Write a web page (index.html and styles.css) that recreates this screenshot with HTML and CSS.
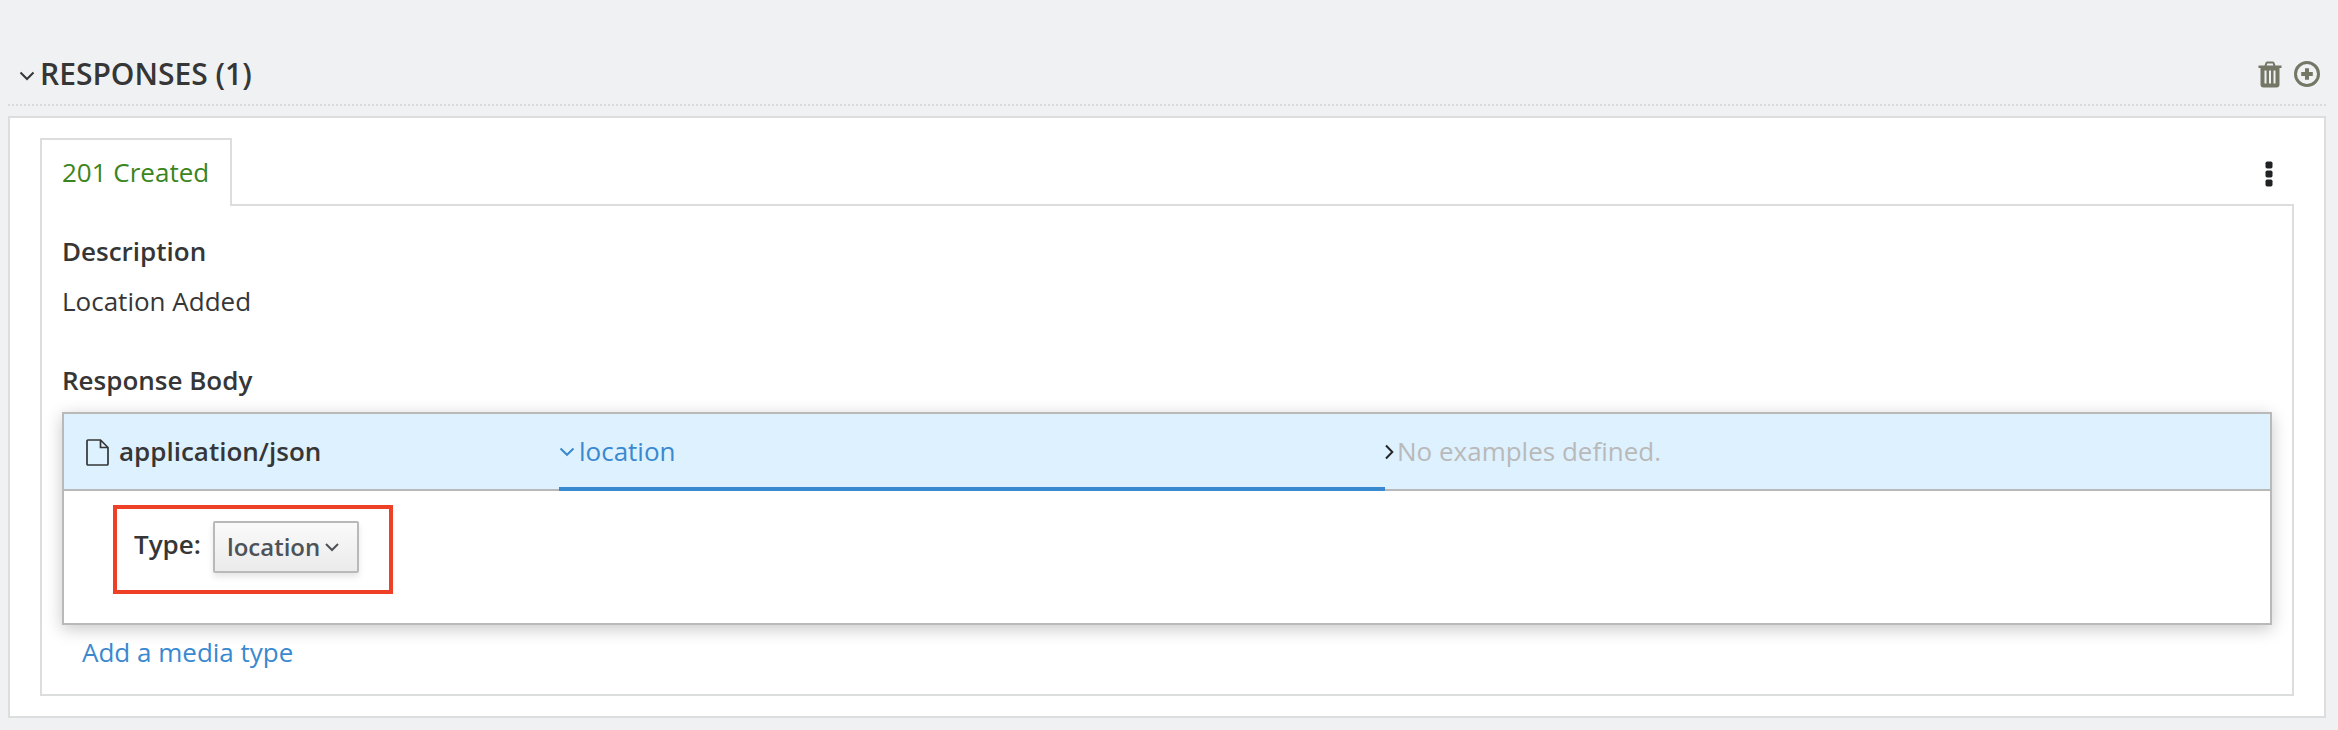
FILE: index.html
```html
<!DOCTYPE html>
<html lang="en">
<head>
<meta charset="utf-8">
<title>Responses</title>
<link rel="stylesheet" href="styles.css">
</head>
<body>
<section class="responses">
  <header class="section-head">
    <svg class="section-caret" width="16" height="10" viewBox="0 0 16 10"><path d="M1.5 1.5 8 8 14.5 1.5"/></svg>
    <h2 class="section-title">RESPONSES (1)</h2>
    <div class="actions">
      <svg class="trash" width="24" height="27" viewBox="0 0 24 27"><path fill-rule="evenodd" d="M.5 4.500H6.500L7.500 1.800Q8 .500 9.500.500H14.500Q16 .500 16.500 1.800L17.500 4.500H23.500V7H21.500V23.500Q21.500 26.500 18.500 26.500H5.500Q2.500 26.500 2.500 23.500V7H.500ZM8.700 4.500H15.300L14.700 2.500H9.300ZM6.500 9.500V22.500H8.500V9.500ZM11 9.500V22.500H13V9.500ZM15.500 9.500V22.500H17.500V9.500Z"/></svg>
      <svg class="add" width="26" height="26" viewBox="0 0 26 26"><circle cx="13" cy="13" r="11.500"/><path class="plus" d="M13 7.200V18.800M7.200 13H18.800"/></svg>
    </div>
  </header>
  <div class="card">
    <div class="tabs">
      <div class="tab">201 Created</div>
      <svg class="kebab" width="8" height="26" viewBox="0 0 8 26"><rect x=".5" y=".5" width="7" height="7" rx="1.700"/><rect x=".5" y="9.500" width="7" height="7" rx="1.700"/><rect x=".5" y="18.500" width="7" height="7" rx="1.700"/></svg>
    </div>
    <div class="panel">
      <h3 class="label label-description">Description</h3>
      <p class="description">Location Added</p>
      <h3 class="label label-body">Response Body</h3>
      <div class="media">
        <div class="media-head">
          <div class="media-name">
            <svg class="file" width="23" height="27" viewBox="0 0 23 27"><path d="M2 1H14.500L22 8.500V25Q22 26 21 26H2Q1 26 1 25V2Q1 1 2 1ZM14.500 1V8.500H22"/></svg>
            <span class="media-type">application/json</span>
          </div>
          <div class="media-schema">
            <svg class="caret" width="16" height="10" viewBox="0 0 16 10"><path d="M1.500 1.500 8 7.800 14.500 1.500"/></svg>
            <span class="schema-name">location</span>
          </div>
          <div class="media-examples">
            <svg class="chevron" width="9" height="16" viewBox="0 0 9 16"><path d="M1 1.500 7.300 8 1 14.500"/></svg>
            <span class="examples-text">No examples defined.</span>
          </div>
        </div>
        <div class="media-body">
          <div class="type-row">
            <span class="type-label">Type:</span>
            <button class="select" type="button"><span class="select-text">location</span><svg class="select-caret" width="14" height="10" viewBox="0 0 14 10"><path d="M1 2 7 8 13 2"/></svg></button>
          </div>
        </div>
      </div>
      <a class="add-media">Add a media type</a>
    </div>
  </div>
</section>
</body>
</html>
```
FILE: styles.css
```css
* { box-sizing: border-box; }
body {
  margin: 0;
  min-height: 730px;
  background: #f0f1f3;
  color: #363636;
  font: 26px/36px "Open Sans", "Noto Sans", sans-serif;
}
h2, h3, p { margin: 0; }
svg { display: block; flex: none; fill: none; overflow: visible; }
.responses { padding: 42px 12px 12px 8px; }
.section-head {
  display: flex;
  align-items: center;
  height: 64px;
  padding: 0 6px 0 11px;
  background: repeating-linear-gradient(90deg, #d9dadc 0 2px, transparent 2px 4px) bottom / 100% 2px no-repeat;
}
.section-caret { margin: 4px 5px 0 0; stroke: #363636; stroke-width: 2; }
.section-title { font-size: 30px; line-height: 40px; font-weight: 600; white-space: nowrap; }
.actions { display: flex; align-items: center; gap: 12px; margin-left: auto; }
.trash { fill: #757766; }
.add { stroke: #757766; stroke-width: 3; }
.plus { stroke-width: 4; }
.card {
  height: 602px;
  margin-top: 10px;
  padding: 20px 30px;
  border: 2px solid #dcdddd;
  background: #fff;
}
.tabs { display: flex; justify-content: space-between; height: 68px; padding-right: 21px; }
.tab {
  position: relative;
  width: 192px;
  padding: 14px 0 0 20px;
  border: 2px solid #dcdddd;
  border-bottom: 0;
  background: #fff;
  color: #3b8520;
  white-space: nowrap;
}
.kebab { margin-top: 23px; fill: #202224; }
.panel {
  height: 492px;
  margin-top: -2px;
  padding: 27px 20px 0;
  border: 2px solid #dcdddd;
}
.label { font-size: 26px; font-weight: 600; }
.description { margin-top: 14px; }
.label-body { margin-top: 43px; }
.media {
  height: 213px;
  margin-top: 14px;
  border: 2px solid #b9b9b9;
  box-shadow: 0 4px 16px rgba(0, 0, 0, .22);
}
.media-head {
  display: grid;
  grid-template-columns: 495px 826px 1fr;
  height: 77px;
  border-bottom: 2px solid #b9b9b9;
  background: #def1ff;
}
.media-name, .media-schema, .media-examples { display: flex; align-items: center; }
.media-name { gap: 10px; padding-left: 22px; font-weight: 600; }
.media-name, .media-examples { padding-bottom: 1px; }
.media-type, .schema-name, .examples-text { margin-top: -2px; }
.media-schema {
  gap: 4px;
  height: 77px;
  padding-top: 3px;
  border-bottom: 4px solid #3989d0;
  color: #3989d0;
}
.media-examples { gap: 3px; color: #b9b9b9; }
.file { stroke: #363636; stroke-width: 1.7; }
.caret { stroke: #3989d0; stroke-width: 2; }
.chevron { stroke: #242628; stroke-width: 2; }
.media-body { padding: 14px 0 0 49px; }
.type-row {
  display: flex;
  gap: 12px;
  width: 280px;
  height: 89px;
  padding: 12px 0 0 17px;
  border: 4px solid #ed4026;
}
.type-label { width: 67px; margin-top: 5px; font-weight: 600; white-space: nowrap; }
.select {
  display: flex;
  align-items: center;
  gap: 5px;
  width: 146px;
  height: 52px;
  padding: 0 0 0 12px;
  border: 2px solid #b9b9b9;
  border-radius: 2px;
  background: linear-gradient(#fafafa, #ebebeb);
  box-shadow: 0 4px 6px rgba(3, 3, 3, .1);
  color: #4d5258;
  font: 600 24px/36px "Open Sans", "Noto Sans", sans-serif;
}
.select-caret { stroke: #4d5258; stroke-width: 2; }
.add-media { display: block; margin: 9px 0 0 20px; color: #3989d0; }
```
